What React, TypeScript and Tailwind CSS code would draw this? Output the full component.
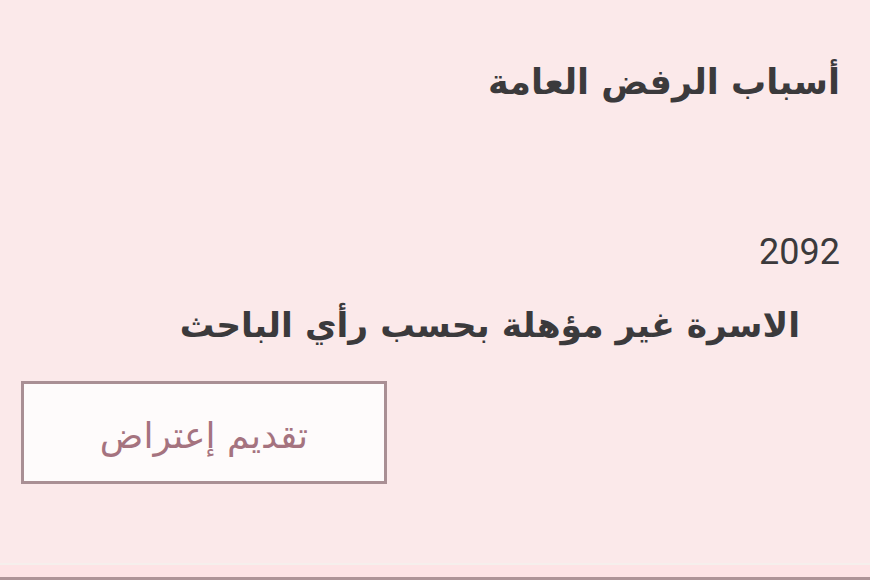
export default function App() {
  return (
    <div
      dir="rtl"
      className="relative flex h-[580px] w-[870px] flex-col bg-[#fbe9ea] text-[#3b3a3c]"
      style={{ fontFamily: '"DejaVu Sans", "Noto Sans", sans-serif' }}
    >
      <div className="flex-1 pr-[30px] pl-[21px]">
        <h2 className="mt-[57px] text-[35px] font-bold leading-[50px]">أسباب الرفض العامة</h2>
        <div
          className="mt-[125px] text-[36px] leading-[40px]"
          dir="ltr"
          style={{ textAlign: "right", fontFamily: "Roboto, sans-serif" }}
        >
          2092
        </div>
        <p className="mt-[28px] mr-[40px] text-[34.5px] font-bold leading-[50px]">
          الاسرة غير مؤهلة بحسب رأي الباحث
        </p>
        <div className="mt-[31px] flex justify-end">
          <button className="flex h-[103px] w-[366px] items-center justify-center border-[3px] border-[#a98f94] bg-[#fefbfb] pt-[6px] text-[36px] text-[#a5737f]">
            تقديم إعتراض
          </button>
        </div>
      </div>
      <div className="h-[2px] bg-[#f5efec]" />
      <div className="h-[12px] bg-[#fde3e5]" />
      <div className="h-[3px] bg-[#ae9397]" />
    </div>
  );
}
